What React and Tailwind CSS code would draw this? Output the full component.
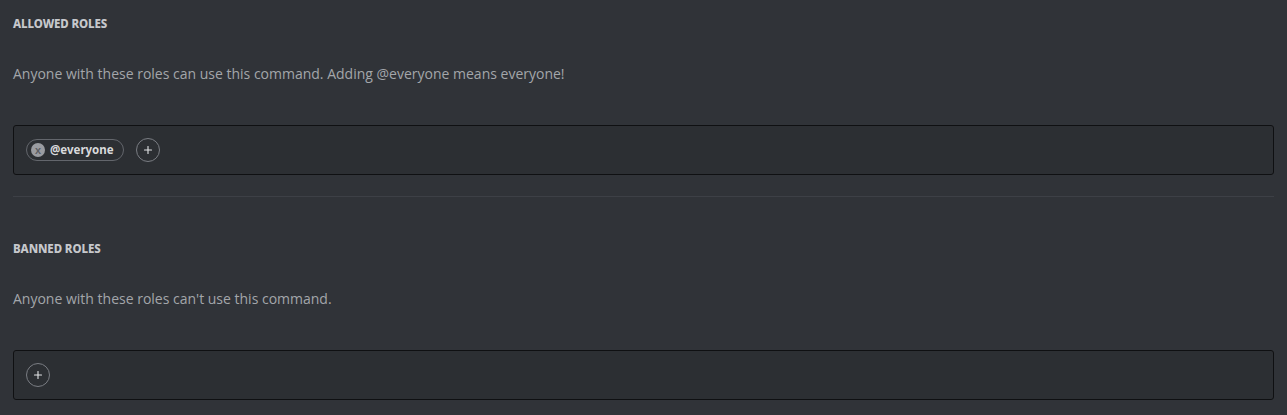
import { Plus } from 'lucide-react';

const AddButton = () => (
  <button className="w-[24px] h-[24px] rounded-full border border-[#7a7d83] flex items-center justify-center text-[#e3e5e8]">
    <Plus size={12} strokeWidth={2.2} />
  </button>
);

const RoleChip = ({ name }) => (
  <div className="h-[22px] pl-[4px] pr-[9px] rounded-full border border-[#63666c] flex items-center gap-[5px]">
    <span className="w-[14px] h-[14px] rounded-full bg-[#9a9ca1] text-[#5a5d62] text-[9px] font-bold leading-none flex items-center justify-center">X</span>
    <span className="text-[11.5px] font-bold text-[#d8d9db]">{name}</span>
  </div>
);

const Section = ({ title, desc, roles }) => (
  <div>
    <h3 className="text-[11.5px] font-extrabold uppercase tracking-[-0.1px] text-[#c6c8cc] leading-4">{title}</h3>
    <p className="mt-[32px] text-[14px] leading-5 text-[#a3a6aa]" style={{ fontFamily: '"Open Sans", sans-serif' }}>{desc}</p>
    <div className="mt-[41px] h-[50px] rounded-[3px] border border-[#0f1012] bg-[#2c2f33] flex items-center gap-[12px] px-[12px]">
      {roles.map(r => <RoleChip key={r} name={r} />)}
      <AddButton />
    </div>
  </div>
);

export default function App() {
  return (
    <div className="w-[1287px] h-[415px] overflow-hidden bg-[#303338] pl-[13px] pr-[13px] pt-4" style={{ fontFamily: '"Noto Sans", "Open Sans", sans-serif' }}>
      <Section
        title="Allowed Roles"
        desc="Anyone with these roles can use this command. Adding @everyone means everyone!"
        roles={['@everyone']}
      />
      <div className="mt-[21px] h-px bg-[#3d4046]" />
      <div className="mt-[44px]">
        <Section
          title="Banned Roles"
          desc="Anyone with these roles can't use this command."
          roles={[]}
        />
      </div>
    </div>
  );
}
